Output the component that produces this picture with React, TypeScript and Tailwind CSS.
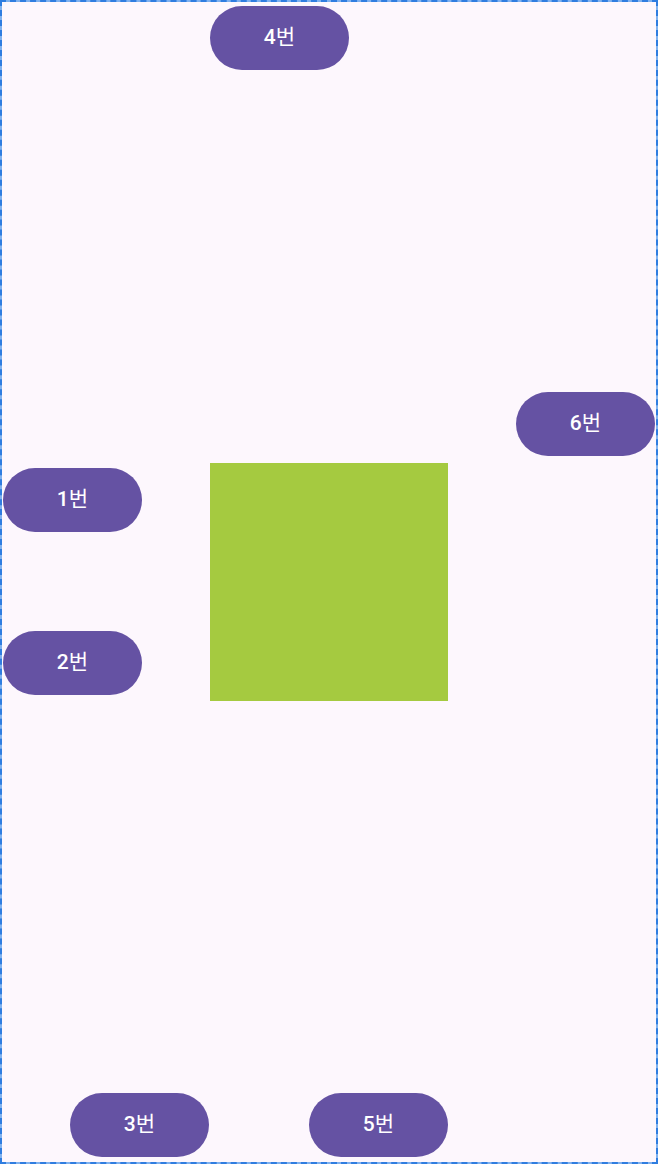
import React from 'react';

// Buttons sit on a constraint-layout canvas: their placement is the content.
const buttons = [
  { num: '4', pos: 'left-[208px] top-[4px]' },
  { num: '6', pos: 'left-[514px] top-[390px]' },
  { num: '1', pos: 'left-[1px] top-[466px]' },
  { num: '2', pos: 'left-[1px] top-[629px]' },
  { num: '3', pos: 'left-[68px] top-[1091px]' },
  { num: '5', pos: 'left-[307px] top-[1091px]' },
];

export default function App() {
  return (
    <div className="w-[658px] h-[1164px] bg-[#7fb1ee]">
      <div className="relative w-full h-full border-2 border-dashed border-[#2f7de0] bg-[#fdf7fd] bg-clip-padding font-['Roboto','Noto_Sans_CJK_KR',sans-serif]">
        {buttons.map((b) => (
          <button
            key={b.num}
            className={`absolute ${b.pos} w-[139px] h-[64px] rounded-full bg-[#6552a3] text-white text-[21px] flex items-center justify-center`}
          >
            <span className="font-medium">{b.num}</span>
            <span className="font-normal">번</span>
          </button>
        ))}
        <div className="absolute left-[208px] top-[461px] w-[238px] h-[238px] bg-[#a5ca40]" />
      </div>
    </div>
  );
}
